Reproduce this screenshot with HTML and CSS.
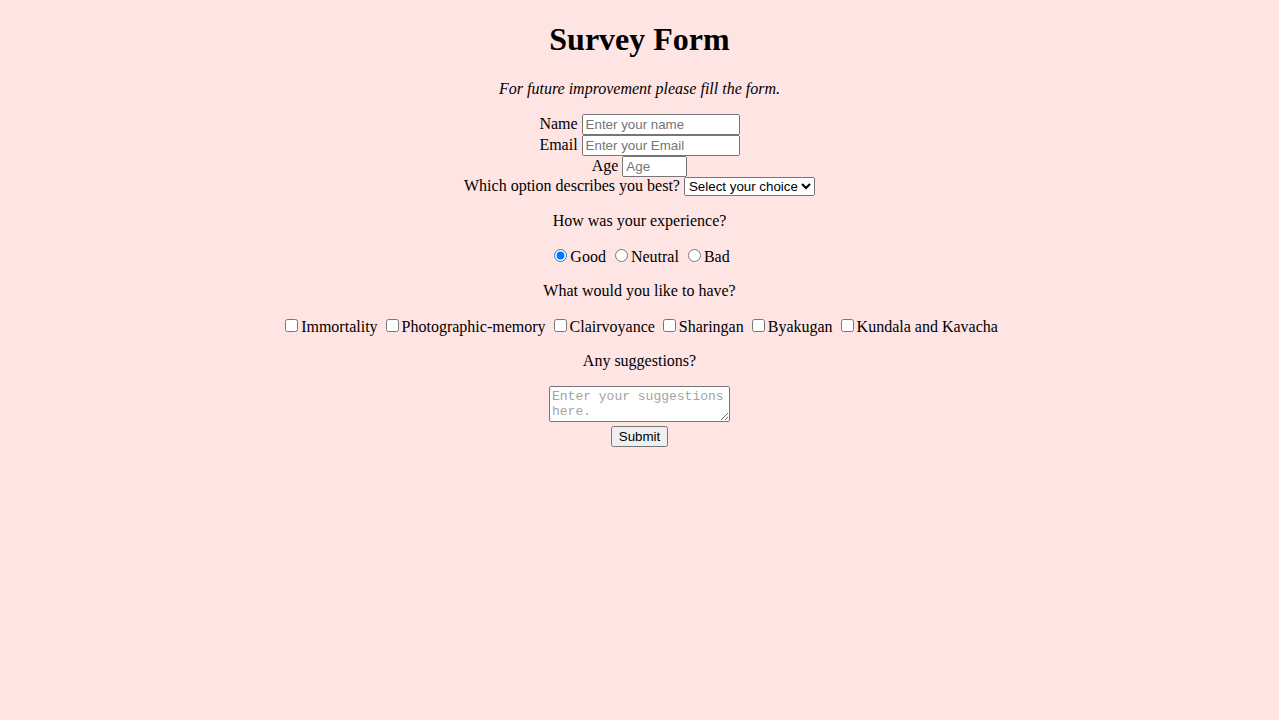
FILE: index.html
```html
<!DOCTYPE html>
<html lang="en">
<head>
<meta charset="utf-8">
<title>Survey Form</title>
<link rel="stylesheet" href="styles.css">
</head>
<body class="page">
<h1 class="title">Survey Form</h1>
<p class="desc"><i>For future improvement please fill the form.</i></p>
<form class="survey">
  <label for="name">Name</label> <input class="field" id="name" type="text" placeholder="Enter your name"><br>
  <label for="email">Email</label> <input class="field" id="email" type="email" placeholder="Enter your Email"><br>
  <label for="age">Age</label> <input class="field age" id="age" type="number" placeholder="Age"><br>
  <label for="role">Which option describes you best?</label> <select class="choice" id="role">
    <option>Select your choice</option>
    <option>Student</option>
    <option>Professional</option>
  </select>
  <p class="q">How was your experience?</p>
  <p class="opts"><input type="radio" name="exp" checked>Good <input type="radio" name="exp">Neutral <input type="radio" name="exp">Bad</p>
  <p class="q">What would you like to have?</p>
  <p class="opts"><input type="checkbox">Immortality <input type="checkbox">Photographic-memory <input type="checkbox">Clairvoyance <input type="checkbox">Sharingan <input type="checkbox">Byakugan <input type="checkbox">Kundala and Kavacha</p>
  <p class="q">Any suggestions?</p>
  <textarea class="suggest" placeholder="Enter your suggestions here."></textarea><br>
  <button class="submit" type="submit">Submit</button>
</form>
</body>
</html>
```

FILE: styles.css
```css
.page {
  margin: 0 8px 8px;
  background: #ffe4e4;
  text-align: center;
  font-family: "Liberation Serif", "Times New Roman", serif;
  font-size: 16px;
  color: #000;
}
.title {
  font-size: 32px;
  font-weight: bold;
  margin: 21.44px 0;
}
.desc {
  margin: 16px 0;
}
.field, .choice, .submit {
  font-family: "Liberation Sans", Arial, sans-serif;
  font-size: 13.333px;
}
.field {
  width: 150px;
}
.age {
  width: 57px;
}
.suggest {
  font-family: "Liberation Mono", "Courier New", monospace;
  font-size: 13px;
  width: 175px;
  height: 30px;
}
.suggest::placeholder {
  color: #a3a3a3;
}
.q, .opts {
  margin: 16px 0;
}
```
